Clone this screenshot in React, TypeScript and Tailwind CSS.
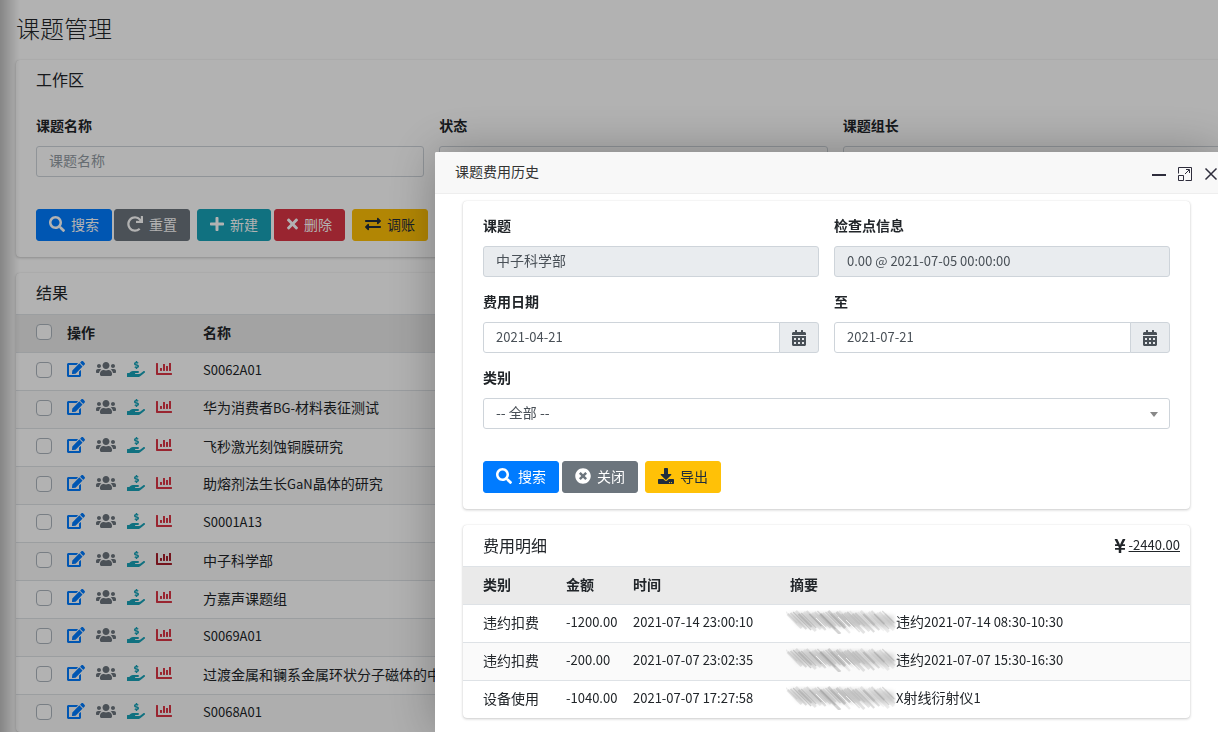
import type { ReactNode } from "react";
import type { IconType } from "react-icons";
import {
  FaCalendarAlt,
  FaChartBar,
  FaDownload,
  FaEdit,
  FaExchangeAlt,
  FaHandHoldingUsd,
  FaPlus,
  FaRedo,
  FaSearch,
  FaTimes,
  FaTimesCircle,
  FaUsers,
  FaYenSign,
} from "react-icons/fa";

interface Project {
  name: string;
  active?: boolean;
}

interface Expense {
  type: string;
  amount: string;
  time: string;
  summary: string;
}

const PROJECTS: Project[] = [
  { name: "S0062A01" },
  { name: "华为消费者BG-材料表征测试" },
  { name: "飞秒激光刻蚀铜膜研究" },
  { name: "助熔剂法生长GaN晶体的研究" },
  { name: "S0001A13" },
  { name: "中子科学部", active: true },
  { name: "方嘉声课题组" },
  { name: "S0069A01" },
  { name: "过渡金属和镧系金属环状分子磁体的中" },
  { name: "S0068A01" },
];

const EXPENSES: Expense[] = [
  {
    type: "违约扣费",
    amount: "-1200.00",
    time: "2021-07-14 23:00:10",
    summary: "违约2021-07-14 08:30-10:30",
  },
  {
    type: "违约扣费",
    amount: "-200.00",
    time: "2021-07-07 23:02:35",
    summary: "违约2021-07-07 15:30-16:30",
  },
  {
    type: "设备使用",
    amount: "-1040.00",
    time: "2021-07-07 17:27:58",
    summary: "X射线衍射仪1",
  },
];

const BUTTON_COLORS = {
  primary: "bg-[#007bff] border-[#007bff] text-white",
  secondary: "bg-[#6c757d] border-[#6c757d] text-white",
  info: "bg-[#17a2b8] border-[#17a2b8] text-white",
  danger: "bg-[#dc3545] border-[#dc3545] text-white",
  warning: "bg-[#ffc107] border-[#ffc107] text-[#1f2d3d]",
};

const INPUT =
  "block w-full h-[31px] min-w-0 px-3 border border-[#ced4da] rounded-[3px] text-[#495057] placeholder:text-[#939ba2]";

const CELL = "h-[38px] pl-3 pb-1 border-t border-[#dee2e6]";
const FIRST_CELL = "h-[38px] pl-5 pb-1 border-t border-[#dee2e6]";
const NUMBER_CELL =
  "h-[38px] pl-3 pb-0.5 border-t border-[#dee2e6] text-[13px]";

// latin letters and digits run one size smaller than the chinese text
function Mixed({ text }: { text: string }) {
  return (
    <>
      {text.split(/([\x20-\x7e]+)/).map((part, i) =>
        i % 2 ? (
          <span key={i} className="text-[13px]">
            {part}
          </span>
        ) : (
          part
        )
      )}
    </>
  );
}

function Card({ children }: { children: ReactNode }) {
  return (
    <section className="bg-white rounded shadow-[0_0_1px_rgba(0,0,0,0.125),0_1px_3px_rgba(0,0,0,0.2)] overflow-hidden">
      {children}
    </section>
  );
}

function Button({
  icon: Icon,
  iconWidth = "w-4",
  color,
  children,
}: {
  icon: IconType;
  iconWidth?: string;
  color: keyof typeof BUTTON_COLORS;
  children: ReactNode;
}) {
  return (
    <button
      type="button"
      className={`flex items-center gap-1.5 h-8 px-3 pb-0.5 border rounded-[3px] whitespace-nowrap ${BUTTON_COLORS[color]}`}
    >
      <Icon className={`h-4 ${iconWidth}`} />
      {children}
    </button>
  );
}

function Field({
  id,
  label,
  children,
}: {
  id: string;
  label: string;
  children: ReactNode;
}) {
  return (
    <div className="mb-4">
      <label htmlFor={id} className="block mb-3 leading-[17px] font-bold">
        {label}
      </label>
      {children}
    </div>
  );
}

function DateInput({ id, value }: { id: string; value: string }) {
  return (
    <div className="flex">
      <input
        id={id}
        type="text"
        defaultValue={value}
        className="flex-1 min-w-0 h-[31px] px-3 pb-0.5 border border-[#ced4da] rounded-l-[3px] text-[13px] text-[#495057]"
      />
      <button
        type="button"
        aria-label="选择日期"
        className="flex items-center justify-center w-10 -ml-px border border-[#ced4da] rounded-r-[3px] bg-[#e9ecef] text-[#495057]"
      >
        <FaCalendarAlt className="h-4 w-3.5" />
      </button>
    </div>
  );
}

function Checkbox({ label }: { label: string }) {
  return (
    <input
      type="checkbox"
      aria-label={label}
      className="block size-4 appearance-none border border-[#adb5bd] rounded bg-white checked:bg-[#007bff]"
    />
  );
}

function RowActions({ active }: { active?: boolean }) {
  return (
    <div className="flex items-center gap-[11px] pb-px">
      <a href="#edit" aria-label="编辑" className="text-[#007bff]">
        <FaEdit className="h-4 w-[18px]" />
      </a>
      <a href="#members" aria-label="成员" className="text-[#6c757d]">
        <FaUsers className="h-4 w-5" />
      </a>
      <a href="#funds" aria-label="经费" className="text-[#17a2b8]">
        <FaHandHoldingUsd className="h-4 w-[18px]" />
      </a>
      <a
        href="#history"
        aria-label="费用历史"
        className={active ? "text-[#a71d2a]" : "text-[#dc3545]"}
      >
        <FaChartBar className="h-4 w-4" />
      </a>
    </div>
  );
}

// pencil hatching drawn over names that are not shown
function Scribble() {
  const strokes = Array.from({ length: 38 }, (_, i) => ({
    x: i * 2.7 - 1,
    y: 1 + ((i * 7) % 4),
    length: Math.min(12 + ((i * 11) % 9), 110 - i * 2.7),
    opacity: (i < 22 ? 0.12 : 0.07) + ((i * 13) % 10) * 0.022,
    width: 1.4 + ((i * 5) % 3) * 0.8,
  }));
  return (
    <svg
      viewBox="0 0 110 24"
      aria-hidden="true"
      className="w-[110px] h-6 -ml-1 shrink-0"
    >
      <defs>
        <filter id="soft">
          <feGaussianBlur stdDeviation="0.6" />
        </filter>
        <filter id="haze" x="-10%" y="-30%" width="120%" height="160%">
          <feGaussianBlur stdDeviation="2" />
        </filter>
      </defs>
      <path
        d="M4 3H70L108 6V17H26L12 15Z"
        fill="#888"
        opacity="0.3"
        filter="url(#haze)"
      />
      <g stroke="#777" filter="url(#soft)">
        {strokes.map((s) => (
          <path
            key={s.x}
            d={`M${s.x} ${s.y}l${s.length} ${s.length}`}
            strokeWidth={s.width}
            opacity={s.opacity}
          />
        ))}
      </g>
      <path
        d="M30 8l12 12M52 7l14 14M60 10l10 10"
        stroke="#fff"
        opacity="0.7"
      />
    </svg>
  );
}

function ProjectPage() {
  return (
    <main className="pl-4 -mr-[33px]">
      <header className="flex items-center h-[60px] pb-1">
        <h1 className="text-2xl font-light">课题管理</h1>
      </header>
      <div className="flex flex-col gap-4">
        <Card>
          <h2 className="px-5 pb-0.5 text-base leading-[39px]">工作区</h2>
          <form className="px-5 py-4">
            <div className="grid grid-cols-3 gap-x-[15px]">
              <Field id="project-name" label="课题名称">
                <input
                  id="project-name"
                  type="text"
                  placeholder="课题名称"
                  className={`${INPUT} pb-1`}
                />
              </Field>
              <Field id="project-status" label="状态">
                <input id="project-status" type="text" className={INPUT} />
              </Field>
              <Field id="project-leader" label="课题组长">
                <input id="project-leader" type="text" className={INPUT} />
              </Field>
            </div>
            <div className="flex gap-[7px] pt-4">
              <div className="flex gap-0.5">
                <Button icon={FaSearch} color="primary">
                  搜索
                </Button>
                <Button icon={FaRedo} color="secondary">
                  重置
                </Button>
              </div>
              <div className="flex gap-[3px]">
                <Button icon={FaPlus} iconWidth="w-3.5" color="info">
                  新建
                </Button>
                <Button icon={FaTimes} iconWidth="w-[11px]" color="danger">
                  删除
                </Button>
              </div>
              <Button icon={FaExchangeAlt} color="warning">
                调账
              </Button>
            </div>
          </form>
        </Card>
        <Card>
          <h2 className="px-5 pb-0.5 text-base leading-[39px]">结果</h2>
          <table className="w-full table-fixed border-separate border-spacing-0 text-left">
            <colgroup>
              <col className="w-[39px]" />
              <col className="w-[136px]" />
              <col />
            </colgroup>
            <thead className="bg-[#eaeaea]">
              <tr>
                <th className={FIRST_CELL}>
                  <Checkbox label="全选" />
                </th>
                <th className={CELL}>操作</th>
                <th className={CELL}>名称</th>
              </tr>
            </thead>
            <tbody>
              {PROJECTS.map((project) => (
                <tr key={project.name} className="even:bg-black/[0.02]">
                  <td className={FIRST_CELL}>
                    <Checkbox label={project.name} />
                  </td>
                  <td className={CELL}>
                    <RowActions active={project.active} />
                  </td>
                  <td className={`${CELL} whitespace-nowrap`}>
                    <Mixed text={project.name} />
                  </td>
                </tr>
              ))}
            </tbody>
          </table>
        </Card>
      </div>
    </main>
  );
}

function ExpenseDialog() {
  return (
    <div
      role="dialog"
      aria-labelledby="dialog-title"
      className="fixed top-[152px] left-[435px] right-0 bottom-0 bg-white rounded-tl-[2px] shadow-[1px_1px_50px_rgba(0,0,0,0.3)] overflow-hidden"
    >
      <header className="flex items-center justify-between h-[42px] pl-5 border-b border-[#eee] bg-[#f8f8f8] text-[#333]">
        <h2 id="dialog-title" className="pb-1">
          课题费用历史
        </h2>
        <div className="flex items-center gap-3 pt-0.5 text-[#2e2d3c]">
          <button type="button" aria-label="最小化">
            <svg viewBox="0 0 14 14" className="size-3.5">
              <path d="M0 8h14" stroke="currentColor" strokeWidth="2" />
            </svg>
          </button>
          <button type="button" aria-label="最大化">
            <svg
              viewBox="0 0 14 14"
              fill="none"
              stroke="currentColor"
              className="size-3.5"
            >
              <path d="M.5 6.500V.5h13v13H7.500M.5 8.500h5v5h-5zM7 7l4-4M8 2.500h3.500V6" />
            </svg>
          </button>
          <button type="button" aria-label="关闭窗口">
            <svg viewBox="0 0 14 14" className="size-3.5">
              <path
                d="M1.500 1.500l11 11M12.500 1.500l-11 11"
                stroke="currentColor"
                strokeWidth="1.500"
              />
            </svg>
          </button>
        </div>
      </header>
      <div className="flex flex-col gap-4 px-7 pt-[7px]">
        <Card>
          <form className="px-5 py-4">
            <div className="grid grid-cols-2 gap-x-[15px]">
              <Field id="topic" label="课题">
                <input
                  id="topic"
                  type="text"
                  readOnly
                  value="中子科学部"
                  className={`${INPUT} pb-1 bg-[#e9ecef]`}
                />
              </Field>
              <Field id="checkpoint" label="检查点信息">
                <input
                  id="checkpoint"
                  type="text"
                  readOnly
                  value="0.00 @ 2021-07-05 00:00:00"
                  className={`${INPUT} pb-0.5 bg-[#e9ecef] text-[13px]`}
                />
              </Field>
              <Field id="date-from" label="费用日期">
                <DateInput id="date-from" value="2021-04-21" />
              </Field>
              <Field id="date-to" label="至">
                <DateInput id="date-to" value="2021-07-21" />
              </Field>
            </div>
            <Field id="category" label="类别">
              <div className="relative">
                <select
                  id="category"
                  className={`${INPUT} pb-1 appearance-none`}
                >
                  <option>-- 全部 --</option>
                </select>
                <svg
                  viewBox="0 0 8 5"
                  aria-hidden="true"
                  className="absolute right-3 top-3.5 w-2 h-[5px] pointer-events-none"
                >
                  <path d="M0 0h8L4 5z" fill="#888" />
                </svg>
              </div>
            </Field>
            <div className="flex gap-[7px] pt-4">
              <div className="flex gap-[3px]">
                <Button icon={FaSearch} color="primary">
                  搜索
                </Button>
                <Button icon={FaTimesCircle} color="secondary">
                  关闭
                </Button>
              </div>
              <Button icon={FaDownload} color="warning">
                导出
              </Button>
            </div>
          </form>
        </Card>
        <Card>
          <div className="flex items-center justify-between h-[41px] pl-5 pr-2.5">
            <h3 className="pb-0.5 text-base">费用明细</h3>
            <p className="flex items-center gap-[3px]">
              <FaYenSign className="h-4 w-3" />
              <span className="text-[13px] underline">-2440.00</span>
            </p>
          </div>
          <table className="w-full table-fixed border-separate border-spacing-0 text-left whitespace-nowrap">
            <colgroup>
              <col className="w-[91px]" />
              <col className="w-[67px]" />
              <col className="w-[157px]" />
              <col />
            </colgroup>
            <thead className="bg-[#eaeaea]">
              <tr>
                <th className={FIRST_CELL}>类别</th>
                <th className={CELL}>金额</th>
                <th className={CELL}>时间</th>
                <th className={CELL}>摘要</th>
              </tr>
            </thead>
            <tbody>
              {EXPENSES.map((expense) => (
                <tr key={expense.time} className="even:bg-black/[0.02]">
                  <td className={FIRST_CELL}>{expense.type}</td>
                  <td className={NUMBER_CELL}>{expense.amount}</td>
                  <td className={NUMBER_CELL}>{expense.time}</td>
                  <td className={CELL}>
                    <div className="flex items-center">
                      <Scribble />
                      <span>
                        <Mixed text={expense.summary} />
                      </span>
                    </div>
                  </td>
                </tr>
              ))}
            </tbody>
          </table>
        </Card>
      </div>
    </div>
  );
}

export default function App() {
  return (
    <div className="h-screen overflow-hidden bg-white font-['Noto_Sans_CJK_SC',sans-serif] text-sm text-[#212529]">
      <ProjectPage />
      {/* shadow of the collapsed sidebar */}
      <div className="fixed inset-y-0 left-0 w-5 bg-linear-to-r from-black/25 to-transparent pointer-events-none" />
      <div className="fixed inset-0 bg-black/30" />
      <ExpenseDialog />
    </div>
  );
}
